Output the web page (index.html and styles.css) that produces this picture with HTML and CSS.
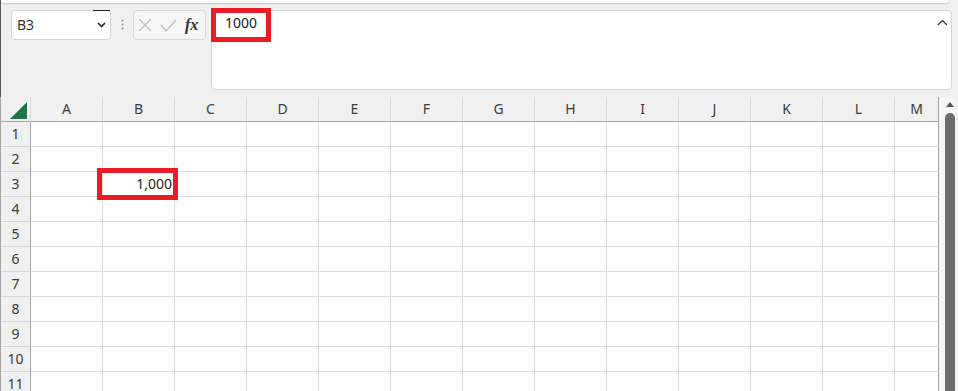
FILE: index.html
```html
<!DOCTYPE html>
<html lang="ja">
<head>
    <meta charset="UTF-8">
    <title>Book1 - Excel</title>
    <link rel="stylesheet" href="styles.css">
</head>
<body>
    <div class="top">
        <div class="ribbon-edge"></div>
        <div class="formula-row">
            <div class="namebox">
                <span class="name">B3</span>
                <span class="dd"><svg width="9" height="6" viewBox="0 0 9 6"><polyline points="1,1 4.5,4.5 8,1" fill="none" stroke="#222" stroke-width="1.6"/></svg></span>
            </div>
            <div class="grip"><svg width="3" height="11" viewBox="0 0 3 11"><circle cx="1.5" cy="1.5" r="1.1" fill="#999"/><circle cx="1.5" cy="5.5" r="1.1" fill="#999"/><circle cx="1.5" cy="9.5" r="1.1" fill="#999"/></svg></div>
            <div class="fbtns">
                <svg class="ico-x" width="14" height="14" viewBox="0 0 14 14"><path d="M1 1 L13 13 M13 1 L1 13" stroke="#bdbdbd" stroke-width="1.2" fill="none"/></svg>
                <svg class="ico-ok" width="17" height="13" viewBox="0 0 17 13"><polyline points="1,6 6,12 16,1" fill="none" stroke="#bdbdbd" stroke-width="1.2"/></svg>
                <span class="fx">fx</span>
            </div>
            <div class="fbar">
                <span class="fval">1000</span>
                <svg class="collapse" width="11" height="7" viewBox="0 0 11 7"><polyline points="1,6 5.5,1.5 10,6" fill="none" stroke="#333" stroke-width="1.2"/></svg>
                <div class="mark mark-fbar"></div>
            </div>
        </div>
    </div>

    <div class="sheet-wrap">
        <div class="sheet">
            <div class="c corner"><svg width="17" height="17" viewBox="0 0 17 17"><polygon points="0,17 17,17 17,0" fill="#217346"/></svg></div>
            <div class="c ch">A</div><div class="c ch">B</div><div class="c ch">C</div><div class="c ch">D</div><div class="c ch">E</div><div class="c ch">F</div><div class="c ch">G</div><div class="c ch">H</div><div class="c ch">I</div><div class="c ch">J</div><div class="c ch">K</div><div class="c ch">L</div><div class="c ch">M</div>

            <div class="c rh">1</div><div class="c"></div><div class="c"></div><div class="c"></div><div class="c"></div><div class="c"></div><div class="c"></div><div class="c"></div><div class="c"></div><div class="c"></div><div class="c"></div><div class="c"></div><div class="c"></div><div class="c"></div>
            <div class="c rh">2</div><div class="c"></div><div class="c"></div><div class="c"></div><div class="c"></div><div class="c"></div><div class="c"></div><div class="c"></div><div class="c"></div><div class="c"></div><div class="c"></div><div class="c"></div><div class="c"></div><div class="c"></div>
            <div class="c rh">3</div><div class="c"></div><div class="c num">1,000</div><div class="c"></div><div class="c"></div><div class="c"></div><div class="c"></div><div class="c"></div><div class="c"></div><div class="c"></div><div class="c"></div><div class="c"></div><div class="c"></div><div class="c"></div>
            <div class="c rh">4</div><div class="c"></div><div class="c"></div><div class="c"></div><div class="c"></div><div class="c"></div><div class="c"></div><div class="c"></div><div class="c"></div><div class="c"></div><div class="c"></div><div class="c"></div><div class="c"></div><div class="c"></div>
            <div class="c rh">5</div><div class="c"></div><div class="c"></div><div class="c"></div><div class="c"></div><div class="c"></div><div class="c"></div><div class="c"></div><div class="c"></div><div class="c"></div><div class="c"></div><div class="c"></div><div class="c"></div><div class="c"></div>
            <div class="c rh">6</div><div class="c"></div><div class="c"></div><div class="c"></div><div class="c"></div><div class="c"></div><div class="c"></div><div class="c"></div><div class="c"></div><div class="c"></div><div class="c"></div><div class="c"></div><div class="c"></div><div class="c"></div>
            <div class="c rh">7</div><div class="c"></div><div class="c"></div><div class="c"></div><div class="c"></div><div class="c"></div><div class="c"></div><div class="c"></div><div class="c"></div><div class="c"></div><div class="c"></div><div class="c"></div><div class="c"></div><div class="c"></div>
            <div class="c rh">8</div><div class="c"></div><div class="c"></div><div class="c"></div><div class="c"></div><div class="c"></div><div class="c"></div><div class="c"></div><div class="c"></div><div class="c"></div><div class="c"></div><div class="c"></div><div class="c"></div><div class="c"></div>
            <div class="c rh">9</div><div class="c"></div><div class="c"></div><div class="c"></div><div class="c"></div><div class="c"></div><div class="c"></div><div class="c"></div><div class="c"></div><div class="c"></div><div class="c"></div><div class="c"></div><div class="c"></div><div class="c"></div>
            <div class="c rh">10</div><div class="c"></div><div class="c"></div><div class="c"></div><div class="c"></div><div class="c"></div><div class="c"></div><div class="c"></div><div class="c"></div><div class="c"></div><div class="c"></div><div class="c"></div><div class="c"></div><div class="c"></div>
            <div class="c rh">11</div><div class="c"></div><div class="c"></div><div class="c"></div><div class="c"></div><div class="c"></div><div class="c"></div><div class="c"></div><div class="c"></div><div class="c"></div><div class="c"></div><div class="c"></div><div class="c"></div><div class="c"></div>

            <div class="mark mark-cell"></div>
        </div>
        <div class="vscroll">
            <svg class="up" width="8" height="5" viewBox="0 0 8 5"><polygon points="0,5 4,0 8,5" fill="#555"/></svg>
            <div class="thumb"></div>
        </div>
    </div>
</body>
</html>
```

FILE: styles.css
```css
* {
    box-sizing: border-box;
}

body {
    margin: 0;
    width: 958px;
    height: 391px;
    overflow: hidden;
    background-color: #f0f0f0;
    font-family: "Noto Sans", "Noto Sans CJK JP", sans-serif;
    font-size: 14px;
    color: #333;
}

/* formula area */
.top {
    height: 97px;
    border-left: 1px solid #5a5a5a;
}

.ribbon-edge {
    height: 3px;
    margin-right: 9px;
    background-color: #fcfcfc;
    border-radius: 0 0 5px 5px;
    box-shadow: 0 1px 2px rgba(0, 0, 0, 0.18);
}

.formula-row {
    display: flex;
    align-items: flex-start;
    padding: 7px 6px 0 10px;
}

.namebox {
    width: 100px;
    height: 30px;
    display: flex;
    align-items: center;
    background-color: #fff;
    border: 1px solid #d6d6d6;
    border-radius: 4px;
}

.name {
    flex: 1;
    padding-left: 5px;
    line-height: 20px;
}

.dd {
    width: 17px;
    align-self: stretch;
    margin-top: -1px;
    border-top: 1px solid #222;
    display: flex;
    align-items: center;
    justify-content: center;
}

.grip {
    width: 22px;
    display: flex;
    justify-content: center;
    padding-top: 9px;
}

.fbtns {
    width: 73px;
    height: 30px;
    display: flex;
    align-items: center;
    padding-left: 4px;
    background-color: #f6f6f6;
    border: 1px solid #d6d6d6;
    border-radius: 4px;
}

.ico-ok {
    margin-left: 8px;
}

.fx {
    margin-left: 8px;
    font-family: "Liberation Serif", serif;
    font-style: italic;
    font-weight: bold;
    font-size: 16px;
    color: #333;
    line-height: 20px;
}

.fbar {
    flex: 1;
    height: 80px;
    margin-left: 5px;
    display: flex;
    justify-content: space-between;
    align-items: flex-start;
    position: relative;
    background-color: #fff;
    border: 1px solid #d6d6d6;
    border-radius: 5px;
}

.fval {
    padding: 2px 0 0 13px;
    line-height: 20px;
    color: #222;
}

.collapse {
    margin: 8px 3px 0 0;
}

.mark {
    position: absolute;
    border: 5px solid #ec1c24;
}

.mark-fbar {
    left: -1px;
    top: -3px;
    width: 60px;
    height: 34px;
}

/* grid */
.sheet-wrap {
    display: flex;
}

.sheet {
    position: relative;
    display: grid;
    grid-template-columns: 30px repeat(12, 72px) 44px;
    grid-auto-rows: 25px;
    border-left: 1px solid #a6a6a6;
}

.c {
    background-color: #fff;
    border-right: 1px solid #dcdcdc;
    border-bottom: 1px solid #dcdcdc;
    line-height: 24px;
}

.sheet > .c:nth-child(14n) {
    border-right-color: #a0a0a0;
}

.ch {
    background-color: #f0f0f0;
    border-right-color: #d9d9d9;
    border-bottom-color: #a6a6a6;
    text-align: center;
    color: #3c3c3c;
}

.corner {
    display: flex;
    justify-content: flex-end;
    align-items: flex-end;
    padding: 0 3px 2px 0;
    background-color: #f0f0f0;
    border-right-color: #d9d9d9;
    border-bottom-color: #a6a6a6;
}

.rh {
    background-color: #f0f0f0;
    border-right-color: #a6a6a6;
    border-bottom-color: #d6d6d6;
    text-align: center;
    color: #3c3c3c;
}

.num {
    text-align: right;
    padding-right: 2px;
    color: #222;
}

.mark-cell {
    left: 96px;
    top: 71px;
    width: 81px;
    height: 32px;
}

.vscroll {
    width: 19px;
    display: flex;
    flex-direction: column;
    padding-left: 6px;
    background-color: #f5f5f5;
    border-radius: 6px 6px 0 0;
}

.up {
    margin: 5px 0 0 1px;
}

.thumb {
    width: 10px;
    height: 300px;
    margin-top: 6px;
    background-color: #6d6d6d;
    border-radius: 5px 5px 0 0;
}
```
